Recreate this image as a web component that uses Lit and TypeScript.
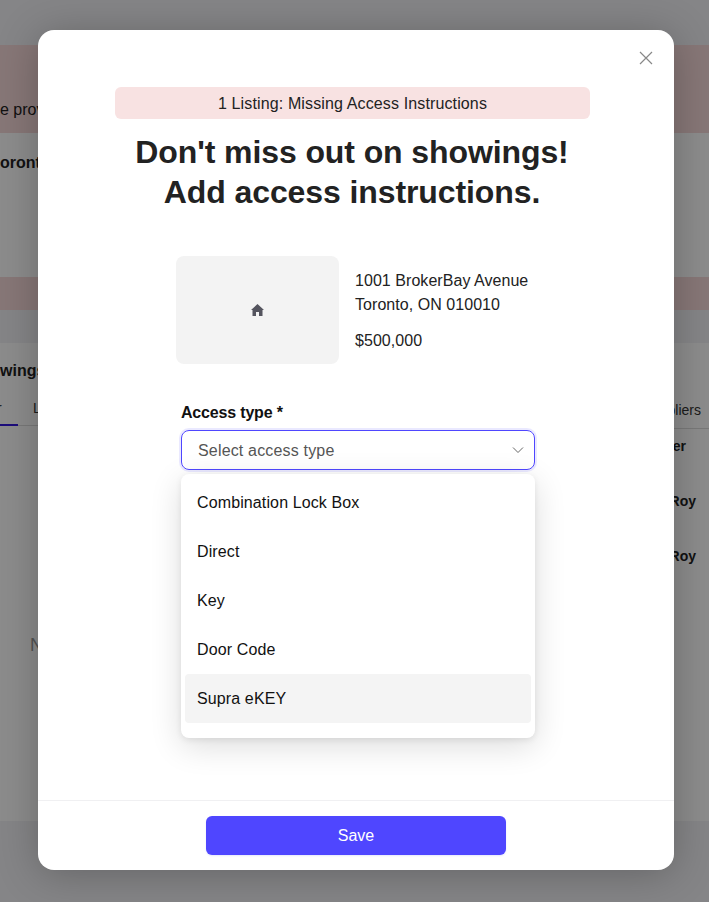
import { LitElement, css, html } from 'lit'
import { customElement } from 'lit/decorators.js'

const accessTypes = ['Combination Lock Box', 'Direct', 'Key', 'Door Code', 'Supra eKEY']

@customElement('app-root')
export class AppRoot extends LitElement {
  static styles = css`
    :host {
      display: block;
      position: relative;
      height: 902px;
      overflow: hidden;
      background: #fff;
      font-family: "Liberation Sans", Arial, sans-serif;
      font-size: 16px;
      color: #222;
    }

    /* page behind the dialog */
    .band { white-space: nowrap; overflow: hidden; }
    .grey { background: #f3f3f6; }
    .pink { background: #f6d9d9; }
    .top { height: 45px; }
    .notice { height: 88px; padding-top: 56px; box-sizing: border-box; font-size: 16px; line-height: 18px; }
    .address { height: 144px; padding-top: 21px; box-sizing: border-box; font-weight: 700; line-height: 18px; }
    .notice2 { height: 33px; }
    .gap { height: 33px; }
    .showings { height: 478px; display: flex; justify-content: space-between; }
    .bottom { height: 81px; }

    .left { width: 38px; padding-top: 19px; }
    .left h3 { margin: 0; font-size: 16px; line-height: 18px; font-weight: 700; }
    .tabs { display: flex; gap: 15px; margin-top: 19px; height: 27px; font-size: 14px; line-height: 18px; border-bottom: 1px solid #ddd; color: #333; box-sizing: border-box; }
    .tab { flex: none; }
    .tab.current { width: 18px; height: 27px; border-bottom: 2px solid #3418e0; box-sizing: border-box; text-indent: -3px; }
    .empty { margin: 209px 0 0 30px; font-size: 18px; color: #999; }

    .right { width: 35px; padding-top: 58px; }
    .suppliers { height: 27px; border-bottom: 1px solid #ddd; font-size: 14px; line-height: 18px; color: #333; display: flex; justify-content: flex-end; padding-right: 8px; }
    .right b { display: flex; justify-content: flex-end; font-size: 14px; line-height: 18px; padding-right: 13px; margin-bottom: 37px; }
    .right b.first { margin-top: 8px; padding-right: 23px; }

    .overlay { position: absolute; inset: 0; background: rgba(0, 0, 0, 0.45); }

    /* dialog */
    .modal {
      position: absolute;
      left: 38px;
      top: 30px;
      width: 636px;
      height: 840px;
      background: #fff;
      border-radius: 16px;
      box-shadow: 0 4px 40px rgba(0, 0, 0, 0.25);
      display: flex;
      flex-direction: column;
    }

    .close { position: absolute; top: 21px; right: 21px; width: 14px; height: 14px; display: block; }

    .body { flex: 1; padding: 57px 0 0 77px; position: relative; }

    .banner {
      width: 475px;
      height: 31px;
      padding-top: 1px;
      line-height: 32px;
      text-align: center;
      background: #f8e2e2;
      border-radius: 6px;
      font-size: 16px;
      letter-spacing: 0.13px;
      color: #222;
    }

    h1 {
      width: 474px;
      margin: 13px 0 0;
      font-size: 32px;
      line-height: 40px;
      font-weight: 700;
      letter-spacing: -0.1px;
      text-align: center;
      color: #222;
    }

    .listing { display: flex; gap: 16px; margin: 44px 0 0 61px; }
    .thumb {
      width: 163px;
      height: 108px;
      background: #f3f3f3;
      border-radius: 8px;
      display: flex;
      align-items: center;
      justify-content: center;
    }
    .thumb svg { width: 13px; height: 12px; fill: #54545e; }
    .info { font-size: 16px; line-height: 24px; padding-top: 13px; letter-spacing: 0.05px; }
    .info p { margin: 0; }
    .info .price { margin-top: 12px; }

    .field { margin: 39px 0 0 66px; width: 354px; position: relative; }
    label { display: block; font-size: 16px; line-height: 18px; padding-top: 1px; font-weight: 700; color: #111; margin-bottom: 8px; letter-spacing: -0.18px; }
    .select {
      height: 40px;
      box-sizing: border-box;
      border: 1.5px solid #4f46ff;
      border-radius: 8px;
      box-shadow: 0 0 0 2px rgba(79, 70, 255, 0.12);
      padding: 0 10px 0 16px;
      display: flex;
      align-items: center;
      justify-content: space-between;
      color: #555;
    }
    .select span { padding-top: 2px; letter-spacing: 0.17px; }
    .select svg { width: 12px; height: 8px; }

    .menu {
      position: absolute;
      left: 0;
      right: 0;
      top: 71px;
      background: #fff;
      border-radius: 8px;
      padding: 4px 4px 15px;
      box-shadow: 0 2px 6px rgba(0, 0, 0, 0.08), 0 8px 32px rgba(0, 0, 0, 0.14);
    }
    .item { height: 49px; line-height: 49px; padding-left: 12px; color: #111; border-radius: 4px; letter-spacing: 0.12px; }
    .item.active { background: #f4f4f4; }

    .footer {
      height: 70px;
      box-sizing: border-box;
      border-top: 1px solid #f0f0f2;
      padding: 15px 0 0 168px;
    }
    button {
      display: block;
      width: 300px;
      height: 39px;
      border: 0;
      border-radius: 6px;
      background: #4f46ff;
      box-shadow: 0 1px 2px #e6e8fb;
      color: #fff;
      font: 16px "Liberation Sans", Arial, sans-serif;
    }
  `

  render() {
    return html`
      <div class="band grey top"></div>
      <div class="band pink notice">e provide access</div>
      <div class="band address">oronto, ON</div>
      <div class="band pink notice2"></div>
      <div class="band grey gap"></div>
      <div class="band showings">
        <div class="left">
          <h3>wings</h3>
          <div class="tabs"><span class="tab current">r</span><span class="tab">L</span></div>
          <div class="empty">N</div>
        </div>
        <div class="right">
          <div class="suppliers">Suppliers</div>
          <b class="first">er</b>
          <b>Roy</b>
          <b>Roy</b>
        </div>
      </div>
      <div class="band grey bottom"></div>
      <div class="overlay"></div>

      <div class="modal">
        <svg class="close" viewBox="0 0 14 14" fill="none" stroke="#888" stroke-width="1.2">
          <path d="M1 1l12 12M13 1L1 13"></path>
        </svg>
        <div class="body">
          <div class="banner">1 Listing: Missing Access Instructions</div>
          <h1>Don't miss out on showings!<br />Add access instructions.</h1>
          <div class="listing">
            <div class="thumb">
              <svg viewBox="0 0 13 12"><path d="M6.5 0L13 6h-1.5v6H8V8H5v4H1.5V6H0z"></path></svg>
            </div>
            <div class="info">
              <p>1001 BrokerBay Avenue</p>
              <p>Toronto, ON 010010</p>
              <p class="price">$500,000</p>
            </div>
          </div>
          <div class="field">
            <label>Access type *</label>
            <div class="select">
              <span>Select access type</span>
              <svg viewBox="0 0 12 8" fill="none" stroke="#666" stroke-width="1"><path d="M1 1.5l5 5 5-5"></path></svg>
            </div>
            <div class="menu">
              ${accessTypes.map((name) => html`
                <div class="item ${name === 'Supra eKEY' ? 'active' : ''}">${name}</div>
              `)}
            </div>
          </div>
        </div>
        <div class="footer"><button>Save</button></div>
      </div>
    `
  }
}

declare global {
  interface HTMLElementTagNameMap {
    'app-root': AppRoot
  }
}
